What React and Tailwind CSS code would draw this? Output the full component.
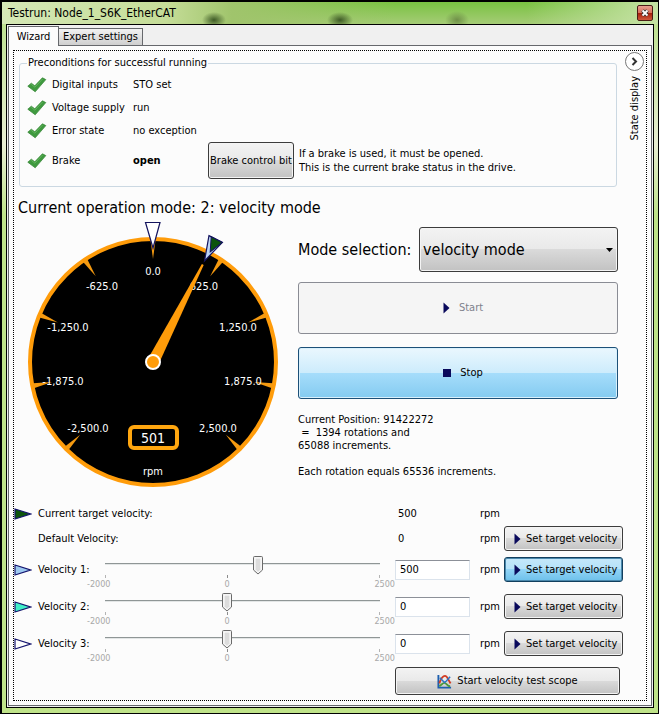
import React, { useState } from 'react';
import clsx from 'clsx';

const CHECKS = [
  { label: 'Digital inputs', value: 'STO set' },
  { label: 'Voltage supply', value: 'run' },
  { label: 'Error state', value: 'no exception' },
];

const DIAL_LABELS = [
  { text: '-2,500.0', x: 63, y: 212, angle: -135 },
  { text: '-1,875.0', x: 38, y: 165, angle: -101.25 },
  { text: '-1,250.0', x: 43, y: 111, angle: -67.5 },
  { text: '-625.0', x: 77, y: 70, angle: -33.75 },
  { text: '0.0', x: 128, y: 55, angle: 0 },
  { text: '625.0', x: 179, y: 70, angle: 33.75 },
  { text: '1,250.0', x: 213, y: 111, angle: 67.5 },
  { text: '1,875.0', x: 218, y: 165, angle: 101.25 },
  { text: '2,500.0', x: 193, y: 212, angle: 135 },
];

const MIN = -2000;
const MAX = 2500;

const grayButton = 'rounded-[3px] border border-[#3c3c3c] bg-[linear-gradient(#f3f3f3,#e9e9e9_49%,#dadada_50%,#c2c2c2)] shadow-[inset_0_0_0_1px_#f4f4f4]';

function CheckIcon() {
  return (
    <svg width="20" height="18" viewBox="0 0 20 18" aria-hidden="true">
      <path d="M.8 10.200 4.300 7.200 7.800 9.800 15.400 1.800 18.800 3.600 8.200 15.800Z" fill="#3f9a3f" stroke="#3b8a3b" strokeWidth=".8" strokeLinejoin="round" />
      <path d="M4.300 8.400 7.900 11.200 15.600 3" fill="none" stroke="#62b45c" strokeWidth="1" />
    </svg>
  );
}

function PlayIcon() {
  return (
    <svg className="shrink-0" width="7" height="12" viewBox="0 0 7 12" aria-hidden="true">
      <path d="M0.5 0.5 6.5 6 0.5 11.5Z" fill="#0a0a5c" />
    </svg>
  );
}

function MarkerIcon({ fill }) {
  return (
    <svg width="18" height="12" viewBox="0 0 18 12" aria-hidden="true">
      <path d="M1 1 16.5 6 1 11Z" fill={fill} stroke="#14146e" strokeWidth="1.2" />
    </svg>
  );
}

function ScopeIcon() {
  return (
    <svg width="15" height="15" viewBox="0 0 16 16" fill="none" aria-hidden="true">
      <path d="M1.5 1v13.5H15" stroke="#1d5fae" strokeWidth="2" />
      <path d="M2.5 13C5 11.500 6 9.500 8 9.500s3 3.500 6 3.500" stroke="#4c9a3c" strokeWidth="2" />
      <path d="M2.500 10C4 5.500 6 2 8.500 2S12 6.500 14.500 10" stroke="#d23b22" strokeWidth="2" />
      <path d="M3 4 8 9l2-1.500L14 3" stroke="#2d74c4" strokeWidth="1.600" />
    </svg>
  );
}

function Gauge({ value }) {
  return (
    <svg className="shrink-0 text-[11px]" width="256" height="270" viewBox="0 0 256 270" role="img" aria-label="Velocity gauge">
      <circle cx="128" cy="142" r="123" fill="#000" stroke="#ff9c0a" strokeWidth="4" />
      {DIAL_LABELS.map(({ text, angle }) => (
        <path key={text} d="M125.500 20h5L128 39Z" fill="#f59a10" transform={`rotate(${angle} 128 142)`} />
      ))}
      {DIAL_LABELS.map(({ text, x, y }) => (
        <text key={text} x={x} y={y} fill="#fff" textAnchor="middle">{text}</text>
      ))}
      <path d="M122 142 127 32.500h2L134 142Z" fill="#ff9c0a" transform={`rotate(${(value / 2500) * 135} 128 142)`} />
      <circle cx="128" cy="142" r="7" fill="#ff9c0a" stroke="#fff" strokeWidth="2" />
      <rect x="105" y="207" width="47" height="21" rx="4" fill="#000" stroke="#ffa60f" strokeWidth="4" />
      <text x="128" y="223" fill="#fff" textAnchor="middle" className="text-[14px]">{value}</text>
      <text x="128" y="255" fill="#fff" textAnchor="middle">rpm</text>
      <path d="M120.500 2.500h14.500L128 28Z" fill="#fff" stroke="#14145e" strokeWidth="1.200" />
      <g transform="rotate(27 128 142)" stroke="#14145e">
        <path d="M120.500 4h15L128 28.500Z" fill="#bcd4f4" strokeWidth="1.200" />
        <path d="M123 4h12.500L129 18Z" fill="#0c540c" />
      </g>
    </svg>
  );
}

function VelocitySlider({ name, value, onChange }) {
  const left = ((value - MIN) / (MAX - MIN)) * 100;
  return (
    <div className="relative mr-[15px] ml-[5px] h-[37px]">
      <div className="h-[14px] border-b-2 border-[#e3e6e6]">
        <div className="h-[13px] border-b border-[#8f9696]" />
      </div>
      <div className="mt-[10px] flex h-[3px] justify-between">
        <span className="w-px bg-[#b4b4b4]" />
        <span className="w-px bg-[#b4b4b4]" />
      </div>
      <span className="absolute top-[24px] left-[44.4%] h-[3px] w-px bg-[#8c8c8c]" />
      <span className="absolute top-[28px] left-0 -translate-x-[18px] text-[9px] leading-[11px] text-[#a8a8a8]">-2000</span>
      <span className="absolute top-[28px] left-[44.4%] -translate-x-1/2 text-[9px] leading-[11px] text-[#a8a8a8]">0</span>
      <span className="absolute top-[28px] right-0 translate-x-[15px] text-[9px] leading-[11px] text-[#a8a8a8]">2500</span>
      <svg className="absolute top-[5px] -translate-x-1/2" style={{ left: `${left}%` }} width="11" height="19" viewBox="0 0 11 19" aria-hidden="true">
        <path d="M1 1.500Q1 .5 2 .5h7q1 0 1 1V14L5.500 18 1 14Z" fill="#ececec" stroke="#6a6a6a" />
        <path d="M2.500 2h6v11.500l-3 3-3-3Z" fill="#dcdcdc" stroke="#fff" />
      </svg>
      <input
        type="range"
        aria-label={name}
        min={MIN}
        max={MAX}
        value={value}
        onChange={(e) => onChange(Number(e.target.value))}
        className="absolute top-[4px] -left-[5px] h-[20px] w-[calc(100%+10px)] cursor-pointer opacity-0"
      />
    </div>
  );
}

function SetButton({ active }) {
  return (
    <button
      type="button"
      className={clsx(
        'flex h-[25px] w-[119px] items-center gap-[5px] pl-[9px] whitespace-nowrap',
        active
          ? 'rounded-[3px] border border-[#123f5e] bg-[linear-gradient(#c5e8fa,#b4e2f9_49%,#92d4f6_50%,#6cc0ea)] shadow-[inset_0_0_0_1px_#4a88ac]'
          : grayButton
      )}
    >
      <PlayIcon />
      Set target velocity
    </button>
  );
}

export default function App() {
  const [mode, setMode] = useState('velocity mode');
  const [speeds, setSpeeds] = useState([500, 0, 0]);
  const markers = ['#9cc8f0', '#3fefc8', '#ffffff'];

  const setSpeed = (index, value) => setSpeeds(speeds.map((s, i) => (i === index ? value : s)));

  return (
    <div className="flex min-h-screen w-full flex-col border-2 border-r border-b border-black bg-[#bfe389] bg-linear-to-b from-[#b5de83] via-[#e9eed3] via-20% to-[#bfe389] to-30% pr-[4px] pb-[5px] pl-[4px] font-['DejaVu_Sans_Condensed','Noto_Sans',sans-serif] text-[11px] leading-[14px] text-black">
      <header className="-mx-[4px] flex h-[22px] items-center justify-between bg-[radial-gradient(ellipse_12px_8px_at_212px_18px,#3e5a26,transparent),radial-gradient(ellipse_13px_8px_at_338px_18px,#3e5a26,transparent),radial-gradient(ellipse_12px_9px_at_455px_18px,#6f9048,transparent),linear-gradient(90deg,#d5e8b6,#c5dd98_25%,#a0c46c_35%,transparent_60%,transparent_80%,#c5e3a4),linear-gradient(#79c241,#a5cc76)] pr-[5px] pl-[6px]">
        <h1 className="text-[12px]">Testrun: Node_1_S6K_EtherCAT</h1>
        <button type="button" aria-label="Close" className="flex h-[16px] w-[16px] items-center justify-center rounded-[2px] border border-[#4a1c14] bg-[linear-gradient(#e8a090,#d8705c_49%,#a41c08_50%,#d0583c)]">
          <svg width="8" height="8" viewBox="0 0 8 8" aria-hidden="true">
            <path d="M1.500 1.500 6.500 6.500M6.500 1.500 1.500 6.500" stroke="#333" strokeWidth="3.500" />
            <path d="M1.500 1.500 6.500 6.500M6.500 1.500 1.500 6.500" stroke="#fff" strokeWidth="1.800" />
          </svg>
        </button>
      </header>

      <div className="flex flex-1 flex-col border border-black bg-[#f0f0f0] p-px">
        <div role="tablist" className="flex h-[19px] items-end">
          <button type="button" role="tab" aria-selected="true" className="relative z-10 -mb-px h-[20px] w-[51px] border border-b-0 border-[#66686c] bg-[#fcfcfc]">Wizard</button>
          <button type="button" role="tab" aria-selected="false" className="h-[17px] w-[84px] border border-b-0 border-l-0 border-[#66686c] bg-linear-to-b from-[#f2f2f2] to-[#cfcfcf]">Expert settings</button>
        </div>

        <div className="flex flex-1 flex-col border border-[#66686c] bg-[#fcfcfc] p-[4px]">
          <main className="flex flex-1 flex-col border border-dotted border-black">
            <div className="flex">
              <fieldset className="mt-[5px] ml-[5px] flex-1 rounded-[3px] border border-[#cbd8e2] pt-[3px] pb-[7px] pl-[7px]">
                <legend className="px-px">Preconditions for successful running</legend>
                <div className="grid grid-cols-[25px_81px_75px_86px_1fr] items-center">
                  {CHECKS.map(({ label, value }) => (
                    <div key={label} className="col-span-5 grid h-[23px] grid-cols-subgrid items-center">
                      <CheckIcon />
                      <span>{label}</span>
                      <span>{value}</span>
                    </div>
                  ))}
                  <CheckIcon />
                  <span>Brake</span>
                  <span className="font-bold">open</span>
                  <button type="button" className={clsx('h-[37px] whitespace-nowrap', grayButton)}>Brake control bit</button>
                  <p className="pl-[5px]">If a brake is used, it must be opened.<br />This is the current brake status in the drive.</p>
                </div>
              </fieldset>
              <aside className="flex w-[29px] flex-col items-end gap-[5px] pt-px pr-[2px]">
                <button type="button" aria-label="Expand state display" className="flex h-[19px] w-[19px] items-center justify-center rounded-full border border-[#777] bg-white">
                  <svg width="7" height="9" viewBox="0 0 7 9" aria-hidden="true">
                    <path d="M1.500 1 5 4.500 1.500 8" fill="none" stroke="#333" strokeWidth="2" />
                  </svg>
                </button>
                <span className="rotate-180 pl-[2px] whitespace-nowrap [writing-mode:vertical-rl]">State display</span>
              </aside>
            </div>

            <h2 className="mt-[8px] pl-[4px] text-[16px] leading-[25px]">Current operation mode: 2: velocity mode</h2>

            <section className="flex gap-[17px] pr-[28px] pl-[11px]">
              <Gauge value={501} />
              <div className="flex-1 pt-[7px]">
                <div className="flex items-center justify-between">
                  <label htmlFor="mode" className="text-[16px]">Mode selection:</label>
                  <div className="relative">
                    <select
                      id="mode"
                      value={mode}
                      onChange={(e) => setMode(e.target.value)}
                      className={clsx('h-[45px] w-[199px] appearance-none pl-[3px] text-[16px] leading-[22px]', grayButton)}
                    >
                      <option>velocity mode</option>
                      <option>position mode</option>
                    </select>
                    <svg className="pointer-events-none absolute top-[21px] right-[5px]" width="7" height="4" viewBox="0 0 7 4" aria-hidden="true">
                      <path d="M0 0h7L3.500 4Z" fill="#000" />
                    </svg>
                  </div>
                </div>
                <button type="button" disabled className="mt-[10px] flex h-[52px] w-full items-center justify-center gap-[9px] rounded-[3px] border border-[#8a8c94] bg-[#f5f5f5] pl-[10px] text-[#80828c]">
                  <PlayIcon />
                  Start
                </button>
                <button type="button" className="mt-[13px] flex h-[52px] w-full items-center justify-center gap-[9px] rounded-[3px] border border-[#1c5078] bg-[linear-gradient(#eaf7fe,#cdecfc_49%,#a6ddfb_50%,#84cbf0)] pl-[10px] shadow-[inset_0_0_0_1px_#d8f0fc]">
                  <svg width="8" height="8" viewBox="0 0 8 8" aria-hidden="true">
                    <path d="M0 0h8v8H0Z" fill="#0a0a5c" />
                  </svg>
                  Stop
                </button>
                <div className="mt-[14px] flex flex-col gap-[13px] leading-[13px]">
                  <p>Current Position: 91422272<br />&nbsp;=&nbsp; 1394 rotations and<br />65088 increments.</p>
                  <p>Each rotation equals 65536 increments.</p>
                </div>
              </div>
            </section>

            <section className="mt-[12px] grid grid-cols-[24px_62px_1fr_85px_24px_142px] items-center">
              <MarkerIcon fill="#0c540c" />
              <span className="col-span-2 leading-[24px]">Current target velocity:</span>
              <span className="pl-[3px]">500</span>
              <span>rpm</span>
              <span />

              <span />
              <span className="col-span-2">Default Velocity:</span>
              <span className="pl-[3px]">0</span>
              <span>rpm</span>
              <SetButton />

              {speeds.map((speed, index) => (
                <React.Fragment key={index}>
                  <MarkerIcon fill={markers[index]} />
                  <label htmlFor={`velocity-${index}`} className="whitespace-nowrap">Velocity {index + 1}:</label>
                  <VelocitySlider name={`Velocity ${index + 1} slider`} value={speed} onChange={(value) => setSpeed(index, value)} />
                  <input
                    id={`velocity-${index}`}
                    type="text"
                    value={speed}
                    onChange={(e) => setSpeed(index, Number(e.target.value) || 0)}
                    className="h-[20px] w-[75px] border border-[#dbe3ec] border-t-[#8c9098] bg-white pl-[4px]"
                  />
                  <span>rpm</span>
                  <SetButton active={index === 0} />
                </React.Fragment>
              ))}
            </section>

            <button type="button" className={clsx('mt-[5px] mr-[26px] mb-[4px] flex h-[28px] w-[225px] items-center justify-center gap-[5px] self-end', grayButton)}>
              <ScopeIcon />
              Start velocity test scope
            </button>
          </main>
        </div>
      </div>
    </div>
  );
}
